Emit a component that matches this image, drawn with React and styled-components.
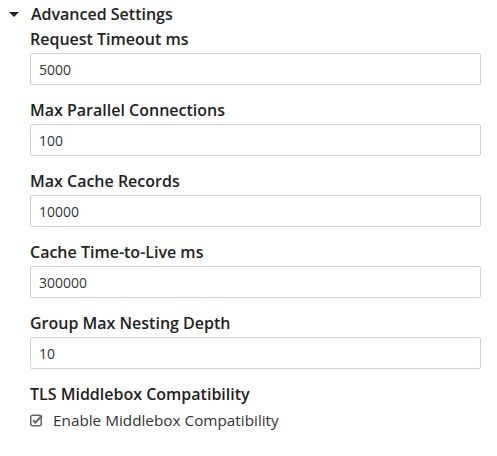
import React from 'react';
import styled, { createGlobalStyle } from 'styled-components';

const GlobalStyle = createGlobalStyle`
  body {
    margin: 0;
    background: #fff;
    font-family: 'Open Sans', 'Liberation Sans', sans-serif;
    color: #222;
  }
`

const Panel = styled.div`
  padding: 2px 16px 0 9px;
  width: 472px;
`

const Header = styled.div`
  display: flex;
  align-items: center;
  height: 24px;
  font-size: 16px;
  font-weight: 600;
`

const Caret = styled.span`
  width: 0;
  height: 0;
  border-left: 5px solid transparent;
  border-right: 5px solid transparent;
  border-top: 5px solid #222;
  margin-right: 12px;
`

const Body = styled.div`
  padding: 2px 0 0 21px;
`

const Field = styled.div`
  display: flex;
  flex-direction: column;
  gap: 3px;
  margin-bottom: 14px;
`

const Label = styled.label`
  font-size: 16px;
  font-weight: 600;
  line-height: 22px;
  color: #222;
`

const Input = styled.input`
  box-sizing: border-box;
  height: 32px;
  width: 100%;
  padding: 0 8px;
  border: 1px solid #d0d0d0;
  border-radius: 2px;
  font-family: 'Open Sans', 'Liberation Sans', sans-serif;
  font-size: 14px;
  color: #333;
  outline: 0;
`

const CheckRow = styled.div`
  display: flex;
  align-items: center;
  gap: 10px;
  font-size: 15.3px;
  line-height: 22px;
  color: #333;
  margin-top: 4px;
`

const fields = [
  ['Request Timeout ms', '5000'],
  ['Max Parallel Connections', '100'],
  ['Max Cache Records', '10000'],
  ['Cache Time-to-Live ms', '300000'],
  ['Group Max Nesting Depth', '10'],
]

const CheckIcon = () => (
  <svg width="13" height="13" viewBox="0 0 13 13">
    <rect x="0.75" y="1.25" width="10.5" height="10.5" rx="2" fill="none" stroke="#666" strokeWidth="1.5" />
    <path d="M3 6.2 L5.4 8.6 L11.8 1.8" fill="none" stroke="#666" strokeWidth="2" />
  </svg>
)

const App = () => {
  return (
    <>
      <GlobalStyle />
      <Panel>
        <Header>
          <Caret />
          Advanced Settings
        </Header>
        <Body>
          {fields.map(([label, value]) => (
            <Field key={label}>
              <Label>{label}</Label>
              <Input type="text" defaultValue={value} />
            </Field>
          ))}
          <Label>TLS Middlebox Compatibility</Label>
          <CheckRow>
            <CheckIcon />
            Enable Middlebox Compatibility
          </CheckRow>
        </Body>
      </Panel>
    </>
  )
}

export default App
